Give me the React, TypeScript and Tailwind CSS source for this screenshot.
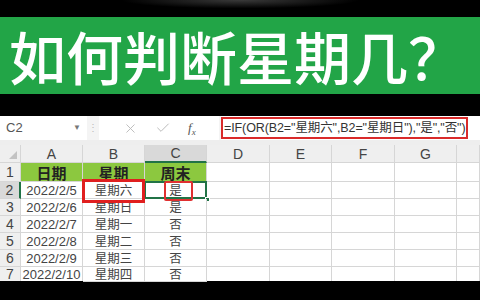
import { Check, X } from "lucide-react";

const rows = [
  { n: 2, date: "2022/2/5", day: "星期六", weekend: "是", h: "h-[17px]" },
  { n: 3, date: "2022/2/6", day: "星期日", weekend: "是", h: "h-[17px]" },
  { n: 4, date: "2022/2/7", day: "星期一", weekend: "否", h: "h-[17px]" },
  { n: 5, date: "2022/2/8", day: "星期二", weekend: "否", h: "h-[17px]" },
  { n: 6, date: "2022/2/9", day: "星期三", weekend: "否", h: "h-[17px]" },
  { n: 7, date: "2022/2/10", day: "星期四", weekend: "否", h: "h-[14px]" },
];

const cols = ["A", "B", "C", "D", "E", "F", "G", ""];
const grid = "grid grid-cols-[21px_62px_62px_62px_63px_62px_63px_62px_1fr]";
const cell = "border-r border-b border-[#d6d6d6] flex items-center justify-center leading-none";
const cjk = { fontFamily: '"Noto Sans CJK SC", sans-serif' };

export default function App() {
  return (
    <div
      className="w-[480px] h-[300px] overflow-hidden bg-black flex flex-col"
      style={{ fontFamily: '"Liberation Sans", "Noto Sans CJK SC", sans-serif' }}
    >
      <div className="h-[17px] bg-[radial-gradient(ellipse_at_50%_0%,#3a3a3a_0%,#000_35%)]" />
      <div className="h-[77px] bg-[#22a547] flex items-center pl-[9px]">
        <h1 className="text-white text-[57px] leading-none font-medium" style={cjk}>
          如何判断星期几？
        </h1>
      </div>
      <div className="h-[22px]" />

      {/* formula bar */}
      <div className="h-[24px] bg-[#f4f4f4] flex items-center">
        <div className="w-[87px] h-full bg-white flex items-center justify-between px-[6px] text-[13px] text-[#555]">
          <span>C2</span>
          <span className="text-[8px] text-[#777]">▼</span>
        </div>
        <div className="w-[12px] flex justify-center text-[#bbb] text-[10px] leading-none">⋮</div>
        <div className="w-[120px] h-full bg-white flex items-center gap-[17px] pl-[24px] text-[#bbb]">
          <X size={15} strokeWidth={1.5} />
          <Check size={16} strokeWidth={1.5} />
          <span className="text-[#555] italic text-[13px]" style={{ fontFamily: '"Liberation Serif", serif' }}>
            f<sub className="text-[9px]">x</sub>
          </span>
        </div>
        <div className="ml-[2px] h-full flex-1 bg-white flex items-center pr-[12px]">
          <div className="w-[247px] h-[22px] border-2 border-[#d92a2a] flex items-center pl-[1px] text-[12.5px] text-[#333] whitespace-nowrap tracking-[-0.1px]">
            =IF(OR(B2="星期六",B2="星期日"),"是","否")
          </div>
        </div>
      </div>
      <div className="h-[5px] bg-[#eeeeee]" />

      {/* sheet */}
      <div className="h-[136px] bg-white text-[13px] text-[#444]">
        <div className={`${grid} h-[18px] bg-[#efefef] text-[#444] text-[14px]`}>
          <div className={`${cell} justify-end items-end pr-[3px] pb-[3px]`}>
            <div className="w-0 h-0 border-l-[8px] border-l-transparent border-b-[8px] border-b-[#c3c3c3]" />
          </div>
          {cols.map((c) => (
            <div key={c + "h"} className={`${cell} ${c === "C" ? "bg-[#d9d9d9] border-b-2 border-b-[#217346]" : ""}`}>
              {c}
            </div>
          ))}
        </div>

        <div className={`${grid} h-[19px]`}>
          <div className={`${cell} bg-[#efefef] text-[14px]`}>1</div>
          {["日期", "星期", "周末"].map((t) => (
            <div key={t} className={`${cell} bg-[#8cc83f] font-bold text-[15px] text-[#222]`} style={cjk}>
              {t}
            </div>
          ))}
          {[0, 1, 2, 3, 4].map((i) => (
            <div key={"e1" + i} className={cell} />
          ))}
        </div>

        {rows.map((r) => (
          <div key={r.n} className={`${grid} ${r.h}`}>
            <div className={`${cell} text-[14px] ${r.n === 2 ? "bg-[#d9d9d9] border-r-2 border-r-[#217346]" : "bg-[#efefef]"}`}>
              {r.n}
            </div>
            <div className={cell}>{r.date}</div>
            <div className={`${cell} relative text-[12.5px]`} style={cjk}>
              {r.day}
              {r.n === 2 && (
                <div className="absolute left-[-1px] top-[-3px] w-[63px] h-[24px] border-[3px] border-[#e01f1f] z-10" />
              )}
            </div>
            <div className={`${cell} relative text-[12.5px]`} style={cjk}>
              {r.weekend}
              {r.n === 2 && (
                <>
                  <div className="absolute inset-[-1px] border-2 border-[#217346]" />
                  <div className="absolute right-[-4px] bottom-[-4px] w-[5px] h-[5px] bg-[#217346] border border-white" />
                  <div className="absolute left-[19px] top-[-1px] w-[29px] h-[20px] border-2 border-[#e03030] rounded-[2px]" />
                </>
              )}
            </div>
            {[0, 1, 2, 3, 4].map((i) => (
              <div key={r.n + "e" + i} className={cell} />
            ))}
          </div>
        ))}
      </div>
      <div className="flex-1 bg-black" />
    </div>
  );
}
